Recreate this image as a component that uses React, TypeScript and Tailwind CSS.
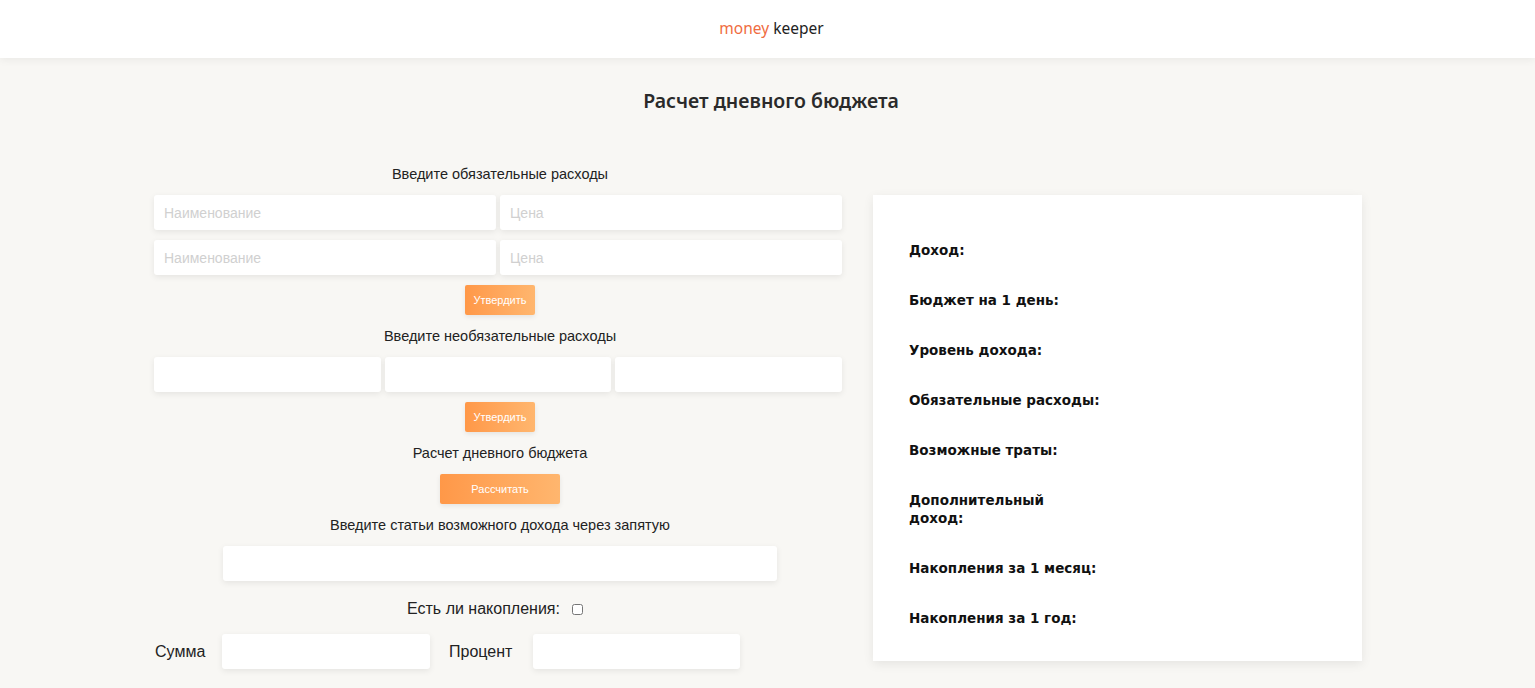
import React from "react";

const inputCls =
  "h-[35px] bg-white rounded-[3px] shadow-[0_2px_6px_rgba(0,0,0,0.08)] px-[10px] text-[14px] text-[#333] placeholder:text-[#d0d0d0] outline-none";

function OrangeButton({ label, wide }: { label: string; wide?: boolean }) {
  return (
    <button
      className={
        (wide ? "w-[120px] " : "w-[70px] ") +
        "h-[30px] rounded-[2px] bg-gradient-to-r from-[#ff9848] to-[#ffb66e] text-white text-[11px] shadow-[0_2px_5px_rgba(0,0,0,0.08)]"
      }
    >
      {label}
    </button>
  );
}

function Label({ children }: { children: React.ReactNode }) {
  return <div className="text-[14.5px] leading-[20px] text-[#222] text-center">{children}</div>;
}

const results = [
  "Доход:",
  "Бюджет на 1 день:",
  "Уровень дохода:",
  "Обязательные расходы:",
  "Возможные траты:",
  "Дополнительный\nдоход:",
  "Накопления за 1 месяц:",
  "Накопления за 1 год:",
];

export default function App() {
  return (
    <div
      className="min-h-[688px] bg-[#f8f7f4] text-[#222]"
      style={{ fontFamily: '"Liberation Sans", sans-serif' }}
    >
      <header className="h-[58px] bg-white shadow-[0_2px_8px_rgba(0,0,0,0.06)] flex items-center justify-center">
        <div className="text-[15.5px] ml-[8px]" style={{ fontFamily: '"Noto Sans", sans-serif' }}>
          <span className="text-[#f06c3f]">money</span> <span className="text-[#222]">keeper</span>
        </div>
      </header>

      <h1
        className="text-center text-[19.5px] font-semibold text-[#2a2a2a] mt-[30px] leading-[26px] ml-[7px]"
        style={{ fontFamily: '"Noto Sans", sans-serif' }}
      >
        Расчет дневного бюджета
      </h1>

      <div className="flex gap-[31px] pl-[154px] mt-[50px]">
        <div className="w-[688px] flex flex-col items-center">
          <div className="flex flex-col items-center pl-[4px]">
            <Label>Введите обязательные расходы</Label>
          </div>
          <div className="w-full grid grid-cols-2 gap-x-[4px] gap-y-[10px] mt-[11px]">
            <input className={inputCls} placeholder="Наименование" />
            <input className={inputCls} placeholder="Цена" />
            <input className={inputCls} placeholder="Наименование" />
            <input className={inputCls} placeholder="Цена" />
          </div>
          <div className="mt-[10px] pl-[4px]">
            <OrangeButton label="Утвердить" />
          </div>
          <div className="mt-[11px] pl-[4px]">
            <Label>Введите необязательные расходы</Label>
          </div>
          <div className="w-full grid grid-cols-3 gap-[4px] mt-[11px]">
            <input className={inputCls} />
            <input className={inputCls} />
            <input className={inputCls} />
          </div>
          <div className="mt-[10px] pl-[4px]">
            <OrangeButton label="Утвердить" />
          </div>
          <div className="mt-[11px] pl-[4px]">
            <Label>Расчет дневного бюджета</Label>
          </div>
          <div className="mt-[11px] pl-[4px]">
            <OrangeButton label="Рассчитать" wide />
          </div>
          <div className="mt-[11px] pl-[4px]">
            <Label>Введите статьи возможного дохода через запятую</Label>
          </div>
          <div className="mt-[11px] pl-[4px]">
            <input className={inputCls + " w-[554px]"} />
          </div>
          <div className="flex items-center gap-[12px] mt-[18px] text-[16px] leading-[20px] pr-[6px]">
            <span>Есть ли накопления:</span>
            <input type="checkbox" className="w-[11px] h-[11px] accent-[#888]" />
          </div>
          <div className="w-full flex items-center mt-[15px] text-[16px]">
            <span className="w-[68px] pl-[1px]">Сумма</span>
            <input className={inputCls + " w-[208px]"} />
            <span className="ml-[19px] w-[84px]">Процент</span>
            <input className={inputCls + " w-[207px]"} />
          </div>
        </div>

        <div className="w-[489px] h-[466px] mt-[31px] bg-white shadow-[0_3px_10px_rgba(0,0,0,0.08)] pt-[46px] pl-[36px]">
          <div
            className="flex flex-col gap-[32px] text-[13.5px] font-bold leading-[18px] text-[#111]"
            style={{ fontFamily: '"DejaVu Sans", Verdana, sans-serif' }}
          >
            {results.map((r) => (
              <div key={r} className="whitespace-pre-line">
                {r}
              </div>
            ))}
          </div>
        </div>
      </div>
    </div>
  );
}
